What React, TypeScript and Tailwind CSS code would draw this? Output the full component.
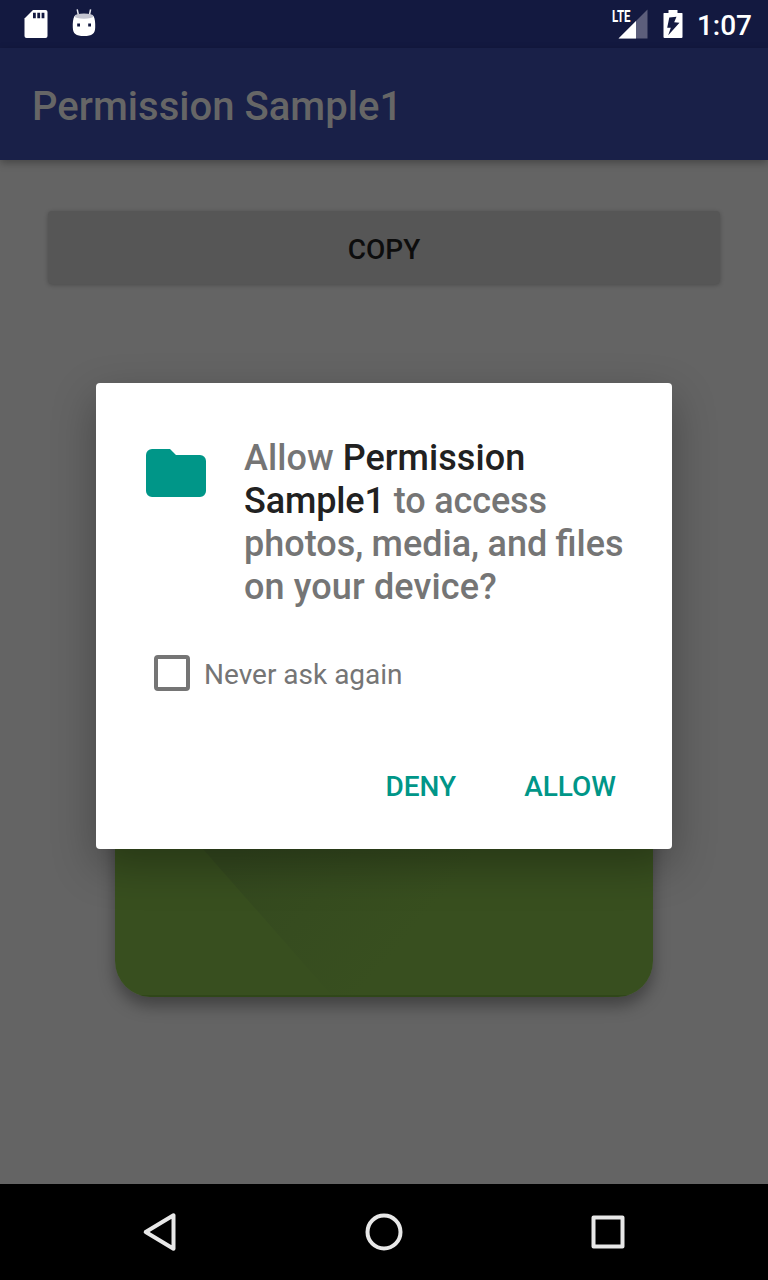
function SdCardIcon() {
  return (
    <svg width="24" height="28" viewBox="0 0 24 28" className="ml-6">
      <path d="M9 0h12.5a2 2 0 0 1 2 2v24a2 2 0 0 1-2 2h-19a2 2 0 0 1-2-2V8.5z" fill="#fff" />
      <path d="M9 2.8h2.8v5.4H9zM13.3 2.8h2.8v5.4h-2.8zM17.6 2.8h2.8v5.4h-2.8z" fill="#131940" />
    </svg>
  );
}

function DroidIcon() {
  return (
    <svg width="24" height="28" viewBox="0 0 24 28" className="mb-[3px] ml-6">
      <path d="M5.200.4 6.400 6M18.600.4 17.400 6" stroke="#e4e5ec" strokeWidth="1.500" />
      <path d="M2.500 7C1 9.500.6 14 .8 18.500c.2 6.200 3 8.500 11.200 8.500s11-2.300 11.200-8.500c.2-4.500-.2-9-1.700-11.500z" fill="#fff" />
      <ellipse cx="12" cy="7.200" rx="9.500" ry="2.600" fill="#c4c5d0" />
      <path d="M5.200 14.600h2.800v2.800H5.200zM16.200 14.600H19v2.800h-2.800z" fill="#131940" />
    </svg>
  );
}

function SignalIcon() {
  return (
    <svg width="42" height="42" viewBox="-4 -6 42 42" className="mr-3.5">
      <path d="M36.500.5v29H7.500z" fill="#5c5e7b" />
      <path d="M25 12v17.500H7.500z" fill="#fff" />
      <text x="1" y="13" fill="#fff" fontSize="16.500" fontWeight="700" textLength="18.500" lengthAdjust="spacingAndGlyphs">LTE</text>
    </svg>
  );
}

function BatteryIcon() {
  return (
    <svg width="20" height="30" viewBox="0 0 20 30" className="mr-3.5">
      <path d="M5.500 1h9v3H19a.5.5 0 0 1 .5.5V28a1 1 0 0 1-1 1h-17a1 1 0 0 1-1-1V4.500A.5.5 0 0 1 1 4h4.500z" fill="#fff" />
      <path d="m6.300 8.500 7.200-.8-2.300 5.600 5.300.4L5.200 26.200l2.600-7.400H4.200z" fill="#131940" />
    </svg>
  );
}

function StatusBar() {
  return (
    <div className="flex h-12 items-center justify-between bg-[#131940]">
      <div className="flex items-center">
        <SdCardIcon />
        <DroidIcon />
      </div>
      <div className="flex items-center pr-4">
        <SignalIcon />
        <BatteryIcon />
        <span className="pt-1 text-[28px] leading-8 font-medium text-white">1:07</span>
      </div>
    </div>
  );
}

function Artwork() {
  return (
    <div className="mx-auto mt-[171px] h-[542px] w-[538px] overflow-hidden rounded-[36px] shadow-[0_9px_16px_rgba(0,0,0,0.35)]">
      <svg width="538" height="542" viewBox="0 0 538 542">
        <defs>
          <linearGradient id="facet" x1="120" y1="400" x2="260" y2="520" gradientUnits="userSpaceOnUse">
            <stop offset="0" stopColor="#34491f" />
            <stop offset="1" stopColor="#384f1f" />
          </linearGradient>
        </defs>
        <path d="M0 0h538v542H0z" fill="#384f1f" />
        <path d="M80 385 218 542h190V385z" fill="url(#facet)" />
        <path d="M0 540h538v2H0z" fill="#304719" />
      </svg>
    </div>
  );
}

function PermissionDialog() {
  return (
    <div role="dialog" className="absolute top-[383px] left-24 h-[466px] w-[576px] rounded bg-white shadow-[0_16px_44px_rgba(0,0,0,0.3)]">
      <div className="flex pt-[54px] pl-[50px]">
        <svg width="60" height="48" viewBox="0 0 60 48" className="mt-3 mr-[38px] shrink-0">
          <path d="M6 0h18l6 6h24a6 6 0 0 1 6 6v30a6 6 0 0 1-6 6H6a6 6 0 0 1-6-6V6a6 6 0 0 1 6-6z" fill="#009688" />
        </svg>
        <p className="text-[36px] leading-[43px] font-medium whitespace-nowrap text-[#757575]">
          <span className="tracking-[0.06px]">
            Allow <span className="text-[#212121]">Permission</span>
          </span>
          <br />
          <span className="tracking-[-0.12px]">
            <span className="text-[#212121]">Sample1</span> to access
          </span>
          <br />
          <span className="[word-spacing:-0.6px]">photos, media, and files</span>
          <br />
          <span className="tracking-[0.13px]">on your device?</span>
        </p>
      </div>
      <label className="mt-[46px] ml-[58px] flex h-9 items-center">
        <span className="h-9 w-9 rounded border-4 border-[#757575]" />
        <span className="ml-3.5 pt-1 text-[28px] leading-8 text-[#757575]">Never ask again</span>
      </label>
      <div className="mt-20 flex justify-end gap-[68px] pr-14 text-[28px] leading-8 font-medium text-[#009688]">
        <button>DENY</button>
        <button>ALLOW</button>
      </div>
    </div>
  );
}

function NavigationBar() {
  return (
    <div className="flex h-24 items-center justify-between bg-black px-[140px]">
      <svg width="40" height="40" viewBox="0 0 40 40" fill="none" stroke="#e8e8e8" strokeWidth="4" strokeLinejoin="round">
        <path d="M33.500 3.300v33.400L5.700 20z" />
      </svg>
      <svg width="40" height="40" viewBox="0 0 40 40" fill="none" stroke="#e8e8e8" strokeWidth="4">
        <circle cx="20" cy="20" r="16.500" />
      </svg>
      <svg width="40" height="40" viewBox="0 0 40 40" fill="none" stroke="#e8e8e8" strokeWidth="4" strokeLinejoin="round">
        <path d="M5.500 5.500h29v29h-29z" />
      </svg>
    </div>
  );
}

export default function App() {
  return (
    <div className="relative flex h-[1280px] w-[768px] flex-col overflow-hidden bg-[#646464] font-[Roboto,sans-serif]">
      <StatusBar />
      <header className="flex h-28 items-center bg-[#192048] pt-1.5 pl-8 shadow-[0_3px_8px_rgba(0,0,0,0.3)]">
        <h1 className="text-[40px] leading-[48px] font-medium tracking-[0.03px] text-[#666]">Permission Sample1</h1>
      </header>
      <main className="flex-1 px-12 pt-[51px]">
        <button className="block h-[73px] w-full rounded bg-[#565656] pt-[5px] text-[28px] leading-8 font-medium text-[#0d0d0d] shadow-[0_1px_4px_rgba(0,0,0,0.25)]">
          COPY
        </button>
        <Artwork />
      </main>
      <NavigationBar />
      <PermissionDialog />
    </div>
  );
}
